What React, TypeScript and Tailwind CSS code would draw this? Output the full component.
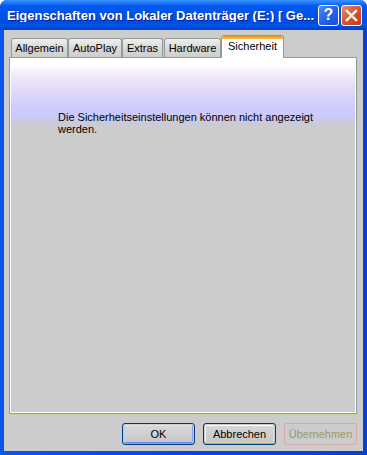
import React from "react";

const font = { fontFamily: '"Liberation Sans", Arial, sans-serif' };

function Tab({ label, w, selected }: { label: string; w: number; selected?: boolean }) {
  if (selected) {
    return (
      <div
        className="relative z-10 h-[23px] -mb-[1px] border border-b-0 border-[#919b9c] rounded-t-[3px] bg-white flex items-start justify-center overflow-hidden"
        style={{ width: w }}
      >
        <div className="absolute left-0 right-0 top-0 h-[3px] bg-gradient-to-b from-[#e68b2c] to-[#ffc73c] rounded-t-[2px]" />
        <span className="mt-[4px] text-[11px] text-black leading-[13px]">{label}</span>
      </div>
    );
  }
  return (
    <div
      className="h-[19px] border border-b-0 border-[#919b9c] rounded-t-[3px] bg-gradient-to-b from-[#f0f0ec] via-[#d8d8d6] to-[#cfcfcd] flex items-start justify-center"
      style={{ width: w }}
    >
      <span className="mt-[3px] text-[11px] text-black leading-[13px]">{label}</span>
    </div>
  );
}

function Button({ label, kind }: { label: string; kind: "default" | "normal" | "disabled" }) {
  if (kind === "disabled") {
    return (
      <div className="w-[73px] h-[22px] rounded-[3px] border border-[#d8a8a8] bg-[#cccccc] flex items-center justify-center text-[11px] text-[#9c9a6a]">
        {label}
      </div>
    );
  }
  return (
    <div className="w-[73px] h-[22px] rounded-[3px] border border-[#003c74] bg-[#cccccc] p-[1px] shadow-[inset_0_-1px_0_#a9a9a9]">
      <div
        className={
          "w-full h-full rounded-[2px] flex items-center justify-center text-[11px] text-black " +
          (kind === "default"
            ? "border border-t-[#cee7ff] border-l-[#b8d0f8] border-r-[#8aa0ee] border-b-[#6982ee] bg-gradient-to-b from-[#d8d8d8] to-[#c8c8c8]"
            : "border border-t-[#fffef0] border-l-[#f4f2e0] border-r-[#e2dfc0] border-b-[#d8d4b0] bg-gradient-to-b from-[#d6d6d6] to-[#c8c8c8]")
        }
      >
        {label}
      </div>
    </div>
  );
}

export default function App() {
  return (
    <div className="w-[367px] h-[455px] overflow-hidden" style={font}>
      <div className="w-[367px] h-[455px] flex flex-col rounded-t-[7px] bg-gradient-to-r from-[#0a55ea] via-[#0449e0] to-[#0a3fd0] overflow-hidden">
        {/* Title bar */}
        <div className="h-[30px] shrink-0 relative flex items-center bg-gradient-to-b from-[#3a93ff] via-[#0058ee] via-[20%] to-[#0048d8]">
          <div className="absolute inset-x-0 bottom-0 h-[6px] bg-gradient-to-b from-[#0058ee] to-[#0040c8]" />
          <span className="relative flex-1 min-w-0 overflow-hidden pl-[7px] text-white text-[13px] font-bold whitespace-nowrap leading-none [text-shadow:1px_1px_0_#0a1e8a]">
            Eigenschaften von Lokaler Datenträger (E:) [ Ge...
          </span>
          <div className="shrink-0 ml-[4px] mr-[5px] flex gap-[2px] relative">
            <div className="w-[21px] h-[21px] rounded-[3px] border border-white bg-gradient-to-br from-[#4d8cfb] via-[#2663e8] to-[#1a4fd0] flex items-center justify-center text-white font-bold text-[16px] leading-none">
              ?
            </div>
            <div className="w-[21px] h-[21px] rounded-[3px] border border-white bg-gradient-to-br from-[#e88c6c] via-[#d7522f] to-[#c03c18] flex items-center justify-center">
              <svg width="13" height="13" viewBox="0 0 13 13">
                <path d="M2 2 L11 11 M11 2 L2 11" stroke="white" strokeWidth="2.4" strokeLinecap="square" />
              </svg>
            </div>
          </div>
        </div>

        {/* Body */}
        <div className="flex-1 mx-[4px] mb-[4px] bg-[#cccccc] flex flex-col">
          <div className="ml-[5px] mt-[5px] w-[348px] flex flex-col">
            {/* tabs */}
            <div className="flex items-end pl-[2px] h-[22px] relative">
              <Tab label="Allgemein" w={57} />
              <Tab label="AutoPlay" w={54} />
              <Tab label="Extras" w={41} />
              <div className="w-[1px]" />
              <Tab label="Hardware" w={57} />
              <Tab label="Sicherheit" w={63} selected />
            </div>
            {/* panel */}
            <div className="h-[357px] border border-[#919b9c] shadow-[1px_1px_0_#d0ce9c] bg-white p-[1px]">
              <div className="w-full h-full bg-[linear-gradient(to_bottom,#ffffff_0px,#ffffff_7px,#f6effb_12px,#ebe3f8_22px,#e0daf8_32px,#d4d1fc_42px,#ccccff_50px,#cbcbf8_58px,#c9c9dc_63px,#cccccc_69px,#cccccc_100%)] pt-[52px] pl-[47px] mr-[2px]">
                <p className="w-[272px] text-[11px] leading-[12px] text-black">
                  Die Sicherheitseinstellungen können nicht angezeigt werden.
                </p>
              </div>
            </div>
          </div>
          {/* buttons */}
          <div className="mt-[9px] flex justify-end gap-[8px] pr-[6px]">
            <Button label="OK" kind="default" />
            <Button label="Abbrechen" kind="normal" />
            <Button label="Übernehmen" kind="disabled" />
          </div>
        </div>
      </div>
    </div>
  );
}
